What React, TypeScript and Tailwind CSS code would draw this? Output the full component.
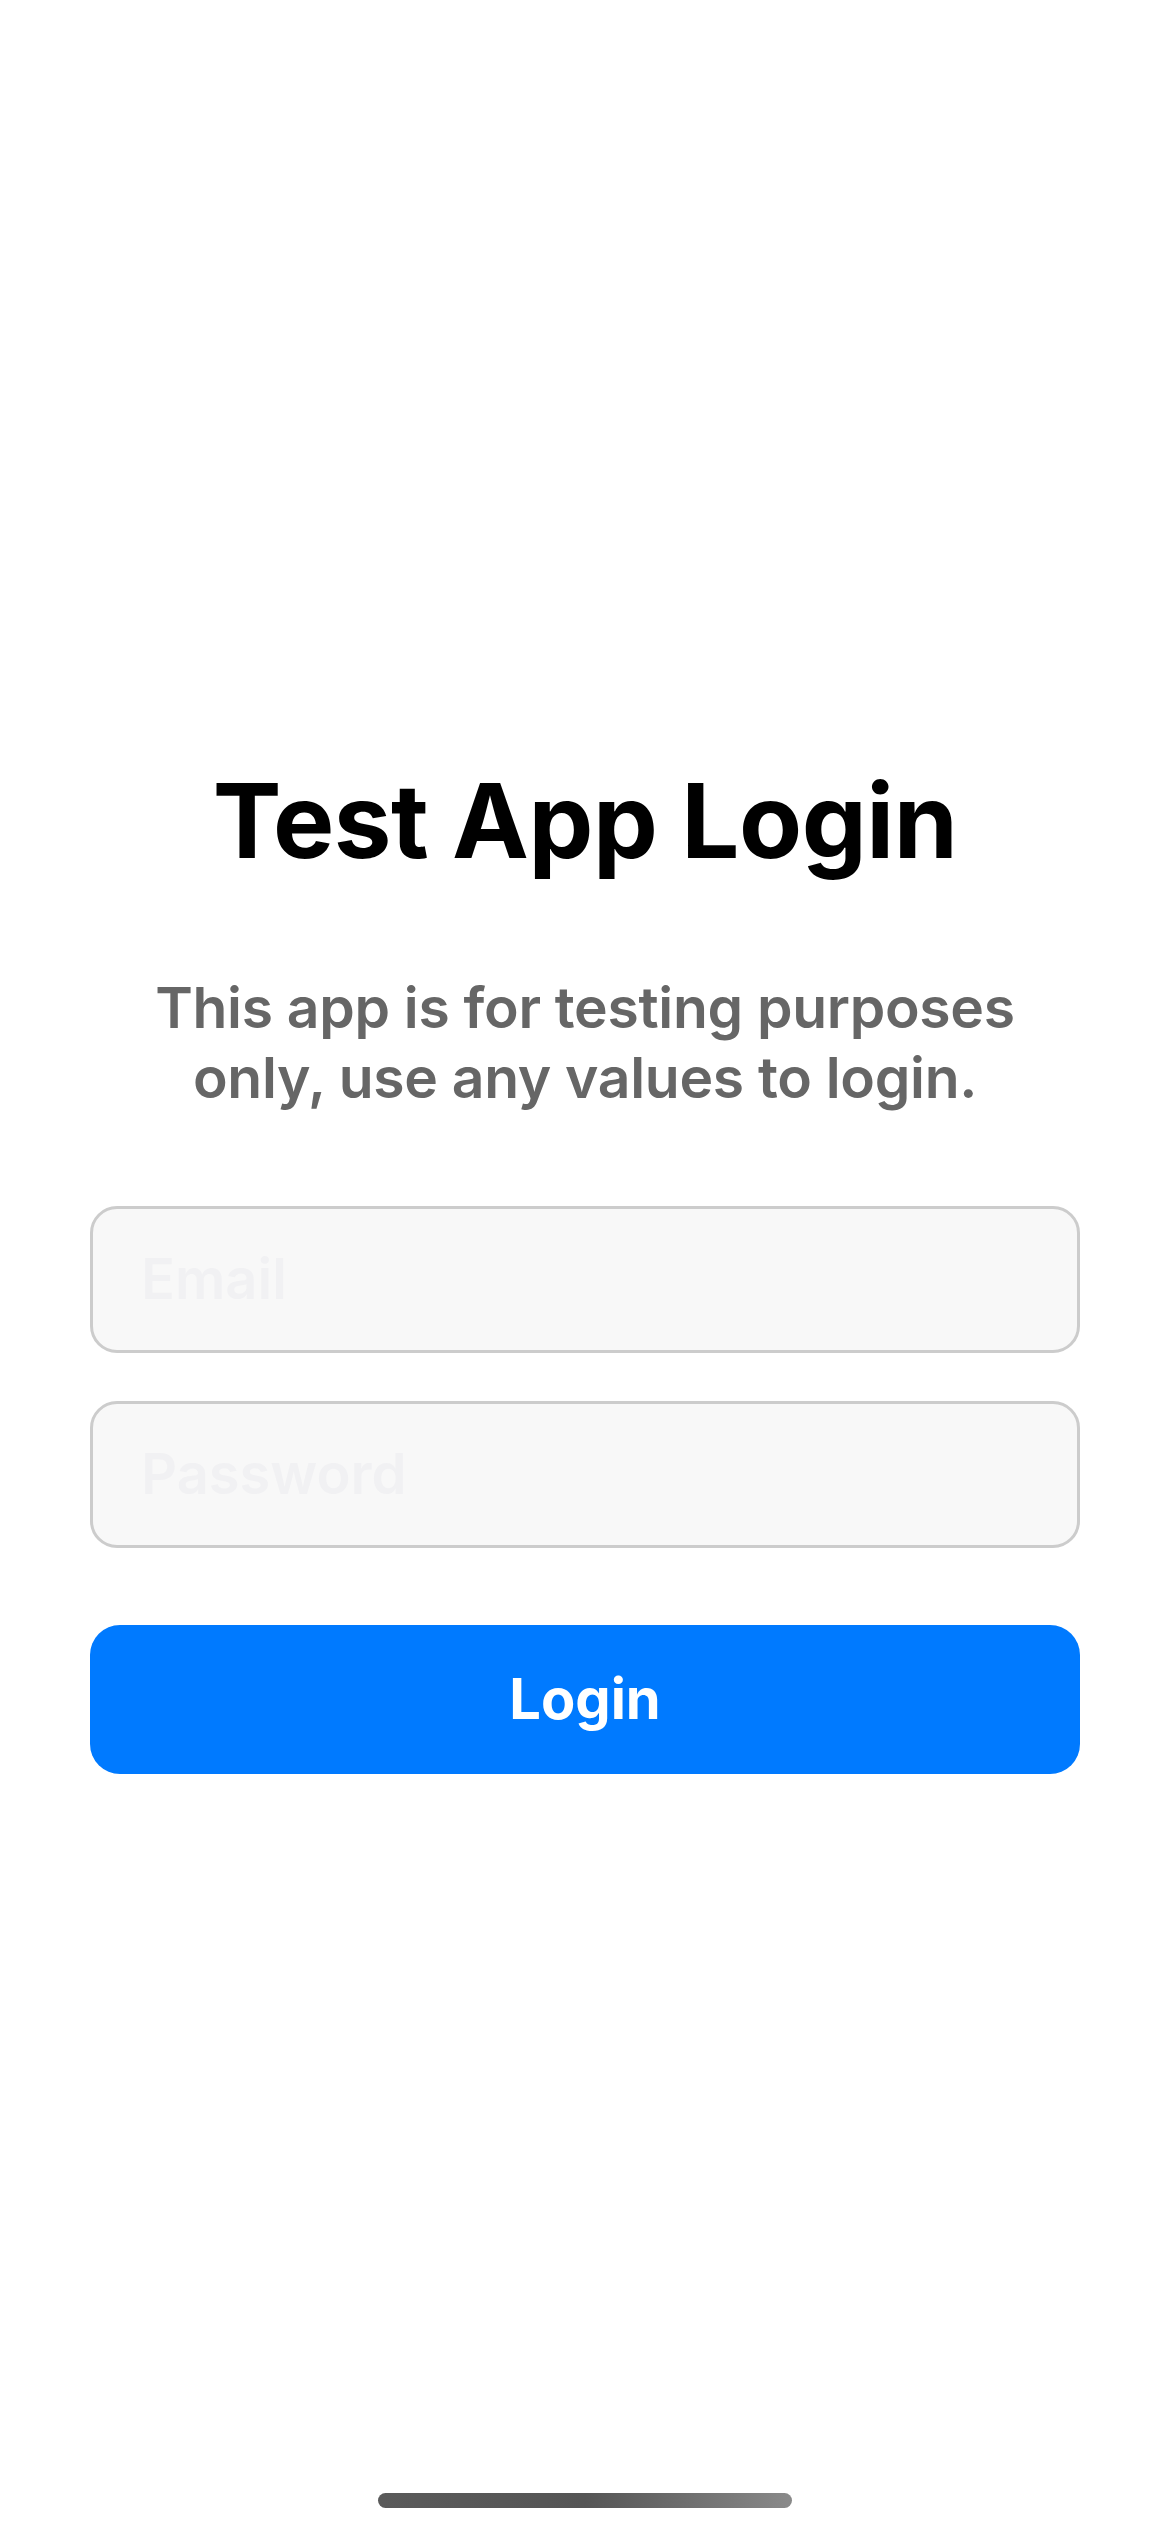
import React, { useState } from 'react';

const App: React.FC = () => {
  const [email, setEmail] = useState('');
  const [password, setPassword] = useState('');

  return (
    <div
      className="relative flex h-[2532px] w-[1170px] flex-col justify-center bg-white px-[90px]"
      style={{ fontFamily: 'Inter, "Noto Sans", sans-serif' }}
    >
      <h1 className="text-center text-[103px] font-bold leading-[124px] tracking-[-0.5px] text-black">
        Test App Login
      </h1>
      <p className="mt-[90px] text-center text-[57px] font-semibold leading-[70px] tracking-[-0.3px] text-[#666666]">
        This app is for testing purposes
        <br />
        only, use any values to login.
      </p>

      <div className="mt-[93px] flex flex-col gap-[48px]">
        <input
          type="email"
          placeholder="Email"
          value={email}
          onChange={(e) => setEmail(e.target.value)}
          className="h-[147px] w-full rounded-[27px] border-[3px] border-[#cccccc] bg-[#f8f8f8] px-[48px] text-[56px] font-semibold text-black outline-none placeholder:text-[#f1f1f3]"
        />
        <input
          type="password"
          placeholder="Password"
          value={password}
          onChange={(e) => setPassword(e.target.value)}
          className="h-[147px] w-full rounded-[27px] border-[3px] border-[#cccccc] bg-[#f8f8f8] px-[48px] text-[56px] font-semibold text-black outline-none placeholder:text-[#f1f1f3]"
        />
      </div>

      <button className="mt-[77px] flex h-[149px] w-full items-center justify-center rounded-[30px] bg-[#007aff] text-[56px] font-bold text-white">
        Login
      </button>

      {/* home indicator */}
      <div className="absolute bottom-[24px] left-1/2 h-[15px] w-[414px] -translate-x-1/2 rounded-full bg-gradient-to-r from-[#5a5a5a] via-[#555555] to-[#8a8a8a]" />
    </div>
  );
};

export default App;
